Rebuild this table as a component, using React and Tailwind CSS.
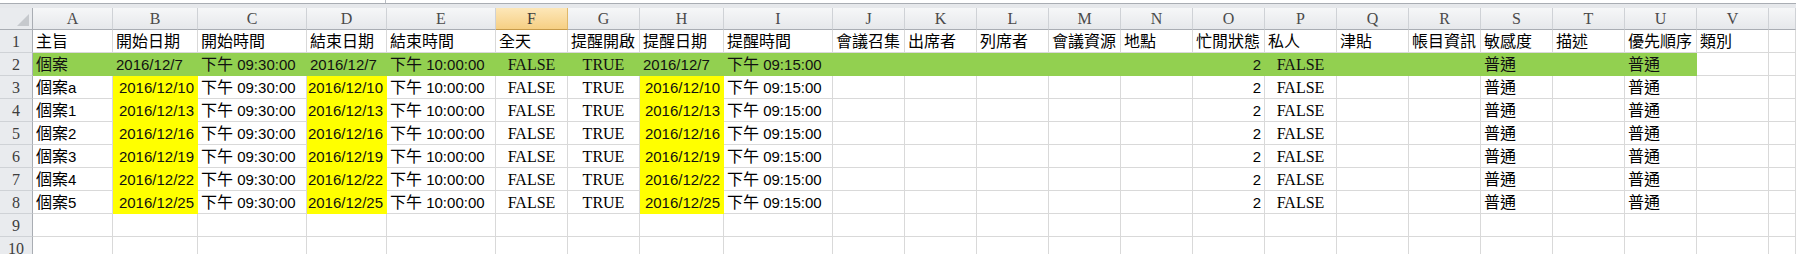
import React from 'react';

// column letters (row header + A..V + the cut-off W)
const cols = ['A', 'B', 'C', 'D', 'E', 'F', 'G', 'H', 'I', 'J', 'K', 'L', 'M', 'N', 'O', 'P', 'Q', 'R', 'S', 'T', 'U', 'V', ''];

const headers = ['主旨', '開始日期', '開始時間', '結束日期', '結束時間', '全天', '提醒開啟', '提醒日期', '提醒時間', '會議召集', '出席者', '列席者', '會議資源', '地點', '忙閒狀態', '私人', '津貼', '帳目資訊', '敏感度', '描述', '優先順序', '類別', ''];

const cases = [
    { name: '個案a', date: '2016/12/10' },
    { name: '個案1', date: '2016/12/13' },
    { name: '個案2', date: '2016/12/16' },
    { name: '個案3', date: '2016/12/19' },
    { name: '個案4', date: '2016/12/22' },
    { name: '個案5', date: '2016/12/25' },
];

// a cell is [text, align, font, fill]
// align: l / r / c ; font: s (serif) / n (numbers) ; fill: g (green) / y (yellow) / ''
const greenRow = () => [
    ['個案', 'l', 'n', 'g'],
    ['2016/12/7', 'l', 'n', 'g'],
    ['下午 09:30:00', 'l', 'n', 'g'],
    ['2016/12/7', 'l', 'n', 'g'],
    ['下午 10:00:00', 'l', 'n', 'g'],
    ['FALSE', 'c', 's', 'g'],
    ['TRUE', 'c', 's', 'g'],
    ['2016/12/7', 'l', 'n', 'g'],
    ['下午 09:15:00', 'l', 'n', 'g'],
    ['', 'l', 's', 'g'],
    ['', 'l', 's', 'g'],
    ['', 'l', 's', 'g'],
    ['', 'l', 's', 'g'],
    ['', 'l', 's', 'g'],
    ['2', 'r', 'n', 'g'],
    ['FALSE', 'c', 's', 'g'],
    ['', 'l', 's', 'g'],
    ['', 'l', 's', 'g'],
    ['普通', 'l', 's', 'g'],
    ['', 'l', 's', 'g'],
    ['普通', 'l', 's', 'g'],
    ['', 'l', 's', ''],
    ['', 'l', 's', ''],
];

const caseRow = ({ name, date }) => [
    [name, 'l', 'n', ''],
    [date, 'r', 'n', 'y'],
    ['下午 09:30:00', 'l', 'n', ''],
    [date, 'r', 'n', 'y'],
    ['下午 10:00:00', 'l', 'n', ''],
    ['FALSE', 'c', 's', ''],
    ['TRUE', 'c', 's', ''],
    [date, 'r', 'n', 'y'],
    ['下午 09:15:00', 'l', 'n', ''],
    ['', 'l', 's', ''],
    ['', 'l', 's', ''],
    ['', 'l', 's', ''],
    ['', 'l', 's', ''],
    ['', 'l', 's', ''],
    ['2', 'r', 'n', ''],
    ['FALSE', 'c', 's', ''],
    ['', 'l', 's', ''],
    ['', 'l', 's', ''],
    ['普通', 'l', 's', ''],
    ['', 'l', 's', ''],
    ['普通', 'l', 's', ''],
    ['', 'l', 's', ''],
    ['', 'l', 's', ''],
];

const emptyRow = () => cols.map(() => ['', 'l', 's', '']);

const rows = [
    headers.map((h) => [h, 'l', 's', '']),
    greenRow(),
    ...cases.map(caseRow),
    emptyRow(),
    emptyRow(),
];

// CJK runs keep 16px, digits go a bit smaller/narrower like the sheet's font
const Runs = ({ text, font }) => {
    if (font !== 'n') return text;
    return text.split(/([\u3000-\u9fff\uff00-\uffef]+)/).filter(Boolean).map((part, i) =>
        /[\u3000-\u9fff\uff00-\uffef]/.test(part)
            ? <span key={i} className="text-[16px] font-['Noto_Sans_CJK_TC',sans-serif]">{part}</span>
            : <span key={i} className="text-[15px] font-['Liberation_Sans',sans-serif]">{part}</span>
    );
};

const Cell = ({ text, align, font, fill }) => {
    const alignCls = align === 'r' ? 'justify-end pr-[3px]' : align === 'c' ? 'justify-center' : 'justify-start pl-[3px]';
    const fillCls = fill === 'g'
        ? 'bg-[#92d050] border-[#92d050] text-[#111]'
        : fill === 'y'
            ? 'bg-[#ffff00] border-[#ffff00] text-[#111]'
            : 'bg-white border-[#d9d9d9] text-black';
    return (
        <div className={`flex items-end whitespace-nowrap border-r border-b text-[16px] leading-[20px] font-['Liberation_Serif','Noto_Sans_CJK_TC',serif] ${alignCls} ${fillCls}`}>
            <span><Runs text={text} font={font} /></span>
        </div>
    );
};

const App = () => {
    return (
        <div className="w-[1796px] h-[254px] overflow-hidden bg-white">
            {/* bottom of the formula bar */}
            <div className="relative h-[3px] bg-white">
                <div className="absolute left-[385px] top-0 h-[3px] w-px bg-[#b8bcc2]" />
            </div>
            <div className="h-px bg-[#a9adb3]" />
            <div className="h-[4px] bg-[#e6e8eb]" />

            <div className="grid grid-cols-[33px_80px_85px_109px_80px_109px_72px_72px_84px_109px_72px_72px_72px_72px_72px_72px_72px_72px_72px_72px_72px_72px_72px_27px] grid-rows-[22px_repeat(10,23px)]">
                {/* corner */}
                <div className="relative bg-[#e9ebee] border-r border-b border-[#a9adb3]">
                    <svg className="absolute right-[3px] bottom-[3px]" width="12" height="12" viewBox="0 0 12 12">
                        <polygon points="12,0 12,12 0,12" fill="#c6c9cd" />
                    </svg>
                </div>
                {cols.map((c, i) => (
                    <div
                        key={`h${i}`}
                        className={`flex items-end justify-center border-r border-b text-[16px] leading-[20px] font-['Liberation_Serif',serif] ${c === 'F'
                            ? 'bg-gradient-to-b from-[#fde7b8] to-[#f6cf83] border-r-[#e0b86a] border-b-[#c69a4a] text-[#3d3d3d]'
                            : 'bg-gradient-to-b from-[#f6f7f8] to-[#e6e8eb] border-r-[#cfd2d6] border-b-[#a9adb3] text-[#4a4a4a]'}`}
                    >
                        {c}
                    </div>
                ))}

                {rows.map((row, r) => (
                    <React.Fragment key={`r${r}`}>
                        <div className="flex items-end justify-center bg-[#e9ebee] border-r border-b border-r-[#a9adb3] border-b-[#cfd2d6] text-[16px] leading-[20px] text-[#3d3d3d] font-['Liberation_Serif',serif]">
                            {r + 1}
                        </div>
                        {row.map(([text, align, font, fill], c) => (
                            <Cell key={`c${r}-${c}`} text={text} align={align} font={font} fill={fill} />
                        ))}
                    </React.Fragment>
                ))}
            </div>
        </div>
    );
};

export default App;
